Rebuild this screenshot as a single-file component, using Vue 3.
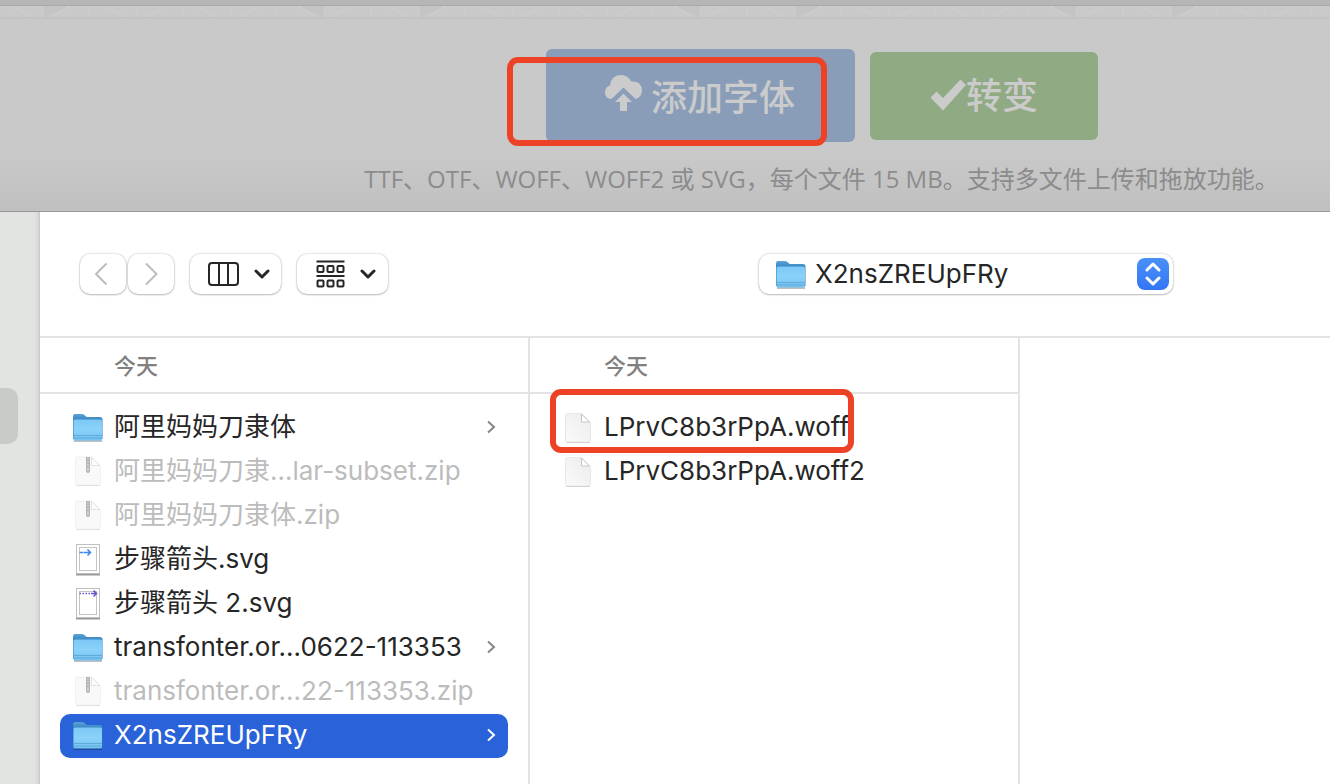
<script setup>
import { ref } from 'vue'

const folder = ref('X2nsZREUpFRy')

const leftFiles = [
  { name: '阿里妈妈刀隶体', kind: 'folder' },
  { name: '阿里妈妈刀隶…lar-subset.zip', kind: 'zip' },
  { name: '阿里妈妈刀隶体.zip', kind: 'zip' },
  { name: '步骤箭头.svg', kind: 'blue' },
  { name: '步骤箭头 2.svg', kind: 'purple' },
  { name: 'transfonter.or…0622-113353', kind: 'folder' },
  { name: 'transfonter.or…22-113353.zip', kind: 'zip' },
  { name: 'X2nsZREUpFRy', kind: 'folder', selected: true },
]
const rightFiles = [
  { name: 'LPrvC8b3rPpA.woff', kind: 'file', marked: true },
  { name: 'LPrvC8b3rPpA.woff2', kind: 'file' },
]
const columns = [
  { title: '今天', files: leftFiles },
  { title: '今天', files: rightFiles },
]
</script>

<template>
  <div class="screen">
    <svg class="defs" width="0" height="0" aria-hidden="true">
      <defs>
        <linearGradient id="folderBack" x1="0" y1="0" x2="0" y2="1">
          <stop offset="0" stop-color="#5aa3d6" />
          <stop offset="0.3" stop-color="#2f7dbd" />
        </linearGradient>
        <linearGradient id="folderFront" x1="0" y1="0" x2="0" y2="1">
          <stop offset="0" stop-color="#7cc8f5" />
          <stop offset="0.5" stop-color="#8ad2fa" />
          <stop offset="1" stop-color="#73bfee" />
        </linearGradient>
        <linearGradient id="paper" x1="0" y1="1" x2="1" y2="0">
          <stop offset="0" stop-color="#fafafa" />
          <stop offset="1" stop-color="#ececec" />
        </linearGradient>
        <symbol id="folder" viewBox="0 0 32 32">
          <path d="M2 29h28" stroke="#000" stroke-opacity="0.25" stroke-width="2" />
          <path d="M1 5q0-3 2-3h7q2 0 3 1.500t3 1.500h12q2.500 0 2.500 2.500V27H1z" fill="url(#folderBack)" />
          <path d="M1.500 9q0-1.500 1.500-1.500h25.500q1.500 0 1.500 1.500V27q0 1.500-1.500 1.500H3q-1.500 0-1.500-1.500z" fill="url(#folderFront)" />
          <path d="M2 23.500h28M2 26h28" stroke="#5cabdc" stroke-width="1" />
        </symbol>
        <symbol id="file" viewBox="0 0 32 32">
          <path d="M5.500 1.500h14l9 9V28q0 2-2 2h-21q-2 0-2-2V3.500q0-2 2-2z" fill="url(#paper)" stroke="#e8e8e8" />
          <path d="M4.500 30.500h23.500" stroke="#d2d2d2" />
          <path d="M19.500 2v8h8z" fill="#fff" stroke="#c6c6c6" />
        </symbol>
        <symbol id="zip" viewBox="0 0 32 32">
          <path d="M5.500 1h14l9 9V27q0 2-2 2h-21q-2 0-2-2V3q0-2 2-2z" fill="#f9f9f9" stroke="#f0f0f0" />
          <path d="M4.500 29.500h23.500" stroke="#e2e2e2" />
          <path d="M19.500 1.500v8h8z" fill="#fff" stroke="#e2e2e2" />
          <path d="M14 1h4v14q0 2-2 2t-2-2z" fill="#b3b6b3" />
          <path d="M16 2v8" stroke="#e2e2e2" stroke-dasharray="1.500 1.500" />
          <path d="M16 11v4" stroke="#e6e6e6" />
        </symbol>
      </defs>
    </svg>

    <main class="page">
      <div class="bar"></div>
      <svg class="pattern" height="11" aria-hidden="true">
        <defs>
          <pattern id="tiles" width="376" height="11" patternUnits="userSpaceOnUse">
            <path d="M44 0h26l-22 11h-4zM298 0h26v11h-6z" fill="#c4c4c4" />
            <path d="M12 0l20 11M50 11L70 0M104 0l20 11M146 11l20-11M196 0l20 11M240 11l20-11M298 0l20 11M332 11l20-11" fill="none" stroke="#cccccc" stroke-width="2" />
            <path d="M42 0v11M89 0v11M137 0v11M183 0v11M231 0v11M276 0v11M325 0v11M371 0v11" stroke="#cccccc" stroke-width="2" />
          </pattern>
        </defs>
        <rect width="100%" height="11" fill="url(#tiles)" />
      </svg>
      <section class="upload">
        <div class="actions">
          <div class="pick">
            <button type="button" class="action add">
              <svg width="38" height="41" viewBox="0 0 38 41" aria-hidden="true">
                <path d="M6.500 24Q0 23.500 0 17.500 0 12 5 10.500 6 0 16 0 23 0 26 6.500 36.500 5.500 37 15.500 37 22 30.500 24L18.500 12.500z" fill="currentColor" />
                <path d="M18.500 18.500l8.500 8.500h-5v9h-7v-9h-5z" fill="currentColor" />
              </svg>
              <span>添加字体</span>
            </button>
            <div class="mark mark-add"></div>
          </div>
          <button type="button" class="action convert">
            <svg width="37" height="34" viewBox="0 0 37 34" aria-hidden="true">
              <path d="M1.500 18.500l6-6 6.500 6.500L31.500 0.500l5.500 5.500L14 31.500z" fill="currentColor" />
            </svg>
            <span>转变</span>
          </button>
        </div>
        <p class="hint">TTF、OTF、WOFF、WOFF2 或 SVG，每个文件 15 MB。支持多文件上传和拖放功能。</p>
      </section>
    </main>

    <section class="dialog">
      <aside class="sidebar"><div class="current"></div></aside>
      <div class="browser">
        <header class="toolbar">
          <div class="nav">
            <button type="button" class="tool step" aria-label="后退">
              <svg width="18" height="24" viewBox="0 0 18 24"><path d="M12.500 1.500L2 12l10.500 10.500" fill="none" stroke="#bdbdbd" stroke-width="2" /></svg>
            </button>
            <button type="button" class="tool step" aria-label="前进">
              <svg width="14" height="24" viewBox="0 0 14 24"><path d="M2 1.500L12.500 12 2 22.500" fill="none" stroke="#bdbdbd" stroke-width="2" /></svg>
            </button>
          </div>
          <button type="button" class="tool view" aria-label="分栏">
            <svg width="31" height="24" viewBox="0 0 31 24"><g fill="none" stroke="#262626" stroke-width="2"><rect x="1" y="1" width="29" height="22" rx="3" /><path d="M11 1v22M20 1v22" /></g></svg>
            <svg width="16" height="10" viewBox="0 0 16 10"><path d="M2 2l6 6 6-6" fill="none" stroke="#262626" stroke-width="3" stroke-linecap="round" stroke-linejoin="round" /></svg>
          </button>
          <button type="button" class="tool view" aria-label="分组">
            <svg width="29" height="28" viewBox="0 0 29 28"><g fill="none" stroke="#262626" stroke-width="2"><path d="M0.500 1.500h28M0.500 16h28" /><rect x="1.500" y="6" width="6" height="6" rx="1" /><rect x="11.500" y="6" width="6" height="6" rx="1" /><rect x="21.500" y="6" width="6" height="6" rx="1" /><rect x="1.500" y="20.500" width="6" height="6" rx="1" /><rect x="11.500" y="20.500" width="6" height="6" rx="1" /><rect x="21.500" y="20.500" width="6" height="6" rx="1" /></g></svg>
            <svg width="16" height="10" viewBox="0 0 16 10"><path d="M2 2l6 6 6-6" fill="none" stroke="#262626" stroke-width="3" stroke-linecap="round" stroke-linejoin="round" /></svg>
          </button>
          <div class="location">
            <svg class="icon location-icon" viewBox="0 0 32 32"><use href="#folder" /></svg>
            <select v-model="folder" aria-label="文件夹">
              <option>X2nsZREUpFRy</option>
            </select>
            <span class="stepper">
              <svg width="16" height="24" viewBox="0 0 16 24"><path d="M2 8l6-6 6 6M2 16l6 6 6-6" fill="none" stroke="#fff" stroke-width="3" stroke-linecap="round" stroke-linejoin="round" /></svg>
            </span>
          </div>
        </header>

        <div class="columns">
          <section v-for="(column, i) in columns" :key="i" class="column">
            <h2>{{ column.title }}</h2>
            <ul>
              <li v-for="file in column.files" :key="file.name">
                <button type="button" class="row" :class="{ selected: file.selected }" :disabled="file.kind === 'zip'">
                  <svg v-if="file.kind === 'blue' || file.kind === 'purple'" class="icon" viewBox="0 0 32 32">
                    <path d="M4 30.500h24" stroke="#000" stroke-opacity="0.400" stroke-width="2" />
                    <rect x="4.500" y="0.500" width="23" height="29" fill="#fff" stroke="#c0c0c0" />
                    <rect x="7.500" y="3.500" width="17" height="23" fill="#fff" stroke="#c4c4c4" />
                    <path v-if="file.kind === 'blue'" d="M7.500 8.500h4M12 8.500h6M15.500 5.500l3 3-3 3" fill="none" stroke="#3b86f5" stroke-width="1.500" />
                    <g v-else fill="none" stroke="#6554c8" stroke-width="1.500"><path d="M7.500 5.500h12" stroke-dasharray="1.500 1.500" /><path d="M19 5.500h6M21.500 2.500l3 3-3 3" /></g>
                  </svg>
                  <svg v-else class="icon" viewBox="0 0 32 32"><use :href="'#' + file.kind" /></svg>
                  <span class="name">{{ file.name }}</span>
                  <svg v-if="file.kind === 'folder'" class="chevron" width="10" height="16" viewBox="0 0 10 16"><path d="M2 1.500L8 7l-6 5.500" fill="none" stroke="currentColor" stroke-width="2" /></svg>
                </button>
                <div v-if="file.marked" class="mark mark-file"></div>
              </li>
            </ul>
          </section>
        </div>
      </div>
    </section>
  </div>
</template>

<style>
html, body, #app { height: 100%; }
body { margin: 0; }
</style>

<style scoped>
* { box-sizing: border-box; }
.screen {
  min-height: 100%;
  display: flex;
  flex-direction: column;
  overflow: hidden;
  background: #fff;
  font-family: Inter, "Noto Sans CJK SC", sans-serif;
  color: #262626;
}
.defs { position: absolute; }
button, select { font: inherit; color: inherit; margin: 0; border: 0; }
.page {
  height: 211px;
  background: linear-gradient(#c9c9c9 150px, #c0c0c0);
  font-family: "Open Sans", "Noto Sans CJK SC", sans-serif;
}
.bar { height: 6px; background: #b6b6b6; border-bottom: 1px solid #a9a9a9; }
.pattern { display: block; width: 100%; }
.upload {
  border-top: 2px solid #c3c3c3;
  padding: 30px 0 0 313px;
  display: flex;
  flex-direction: column;
  align-items: center;
}
.actions { display: flex; align-items: center; gap: 15px; }
.pick { position: relative; }
.action {
  display: flex;
  align-items: center;
  justify-content: center;
  border-radius: 6px;
  color: #cbcbcb;
  font-size: 36px;
  font-weight: 500;
  line-height: 48px;
}
.add { width: 309px; height: 93px; gap: 8px; background: #899db8; }
.add span { padding-top: 5px; }
.convert { width: 228px; height: 88px; background: #90aa84; }
.mark { position: absolute; border: 6px solid #ee4227; border-radius: 11px; pointer-events: none; }
.mark-add { left: -39px; right: 28px; top: 8px; bottom: -4px; }
.hint { margin: 20px 0 0; font-size: 24px; line-height: 34px; color: #8b8c8d; white-space: nowrap; }

.dialog { flex: 1; display: flex; border-top: 1px solid #989898; }
.sidebar {
  width: 40px;
  padding-top: 176px;
  background: linear-gradient(90deg, #e2e4e1 34px, #d8dad7 38px, #c4c6c3);
}
.current { width: 18px; height: 56px; border-radius: 0 10px 10px 0; background: #c9cbc8; }
.browser { flex: 1; display: flex; flex-direction: column; min-width: 0; background: #fff; }
.toolbar {
  height: 126px;
  padding: 0 40px;
  display: flex;
  align-items: center;
  border-bottom: 2px solid #e3e3e3;
}
.nav { display: flex; gap: 2px; }
.tool, .location {
  height: 40px;
  border-radius: 10px;
  background: #fff;
  box-shadow: 0 0 2px rgba(0, 0, 0, 0.3), 0 1px 2px rgba(0, 0, 0, 0.2);
}
.tool { display: flex; align-items: center; justify-content: center; padding: 0; }
.step { width: 46px; }
.view { width: 91px; gap: 15px; margin-left: 16px; padding-left: 6px; }
.location { position: relative; width: 414px; margin-left: 371px; }
select {
  appearance: none;
  width: 100%;
  height: 40px;
  padding: 0 48px 2px 56px;
  border-radius: 10px;
  background: transparent;
  font-size: 26px;
}
.icon { width: 32px; height: 32px; flex: none; }
.location-icon { position: absolute; left: 16px; top: 5px; }
.stepper {
  position: absolute;
  right: 4px;
  top: 4px;
  width: 32px;
  height: 32px;
  border-radius: 8px;
  display: flex;
  align-items: center;
  justify-content: center;
  background: linear-gradient(#4a90f8, #3376f6);
  pointer-events: none;
}
.columns { flex: 1; display: flex; }
.column { width: 490px; border-right: 2px solid #e3e3e3; }
h2 {
  margin: 0;
  height: 56px;
  padding-left: 74px;
  border-bottom: 2px solid #e3e3e3;
  font-size: 22px;
  font-weight: 500;
  line-height: 56px;
  color: #808080;
}
ul { list-style: none; margin: 0; padding: 12px 20px; }
li { position: relative; }
.row {
  width: 100%;
  height: 44px;
  padding: 0 12px;
  border-radius: 10px;
  display: flex;
  align-items: center;
  gap: 10px;
  background: transparent;
  font-size: 26px;
  line-height: 40px;
  text-align: left;
  white-space: nowrap;
}
.row:disabled { color: #bcbcbc; }
.name { flex: 1; padding-bottom: 2px; }
.chevron { color: #858585; }
.selected, .selected .chevron { color: #fff; }
.selected { background: #2962d9; }
.mark-file { left: 0; width: 304px; top: -17px; bottom: -3px; }
</style>
